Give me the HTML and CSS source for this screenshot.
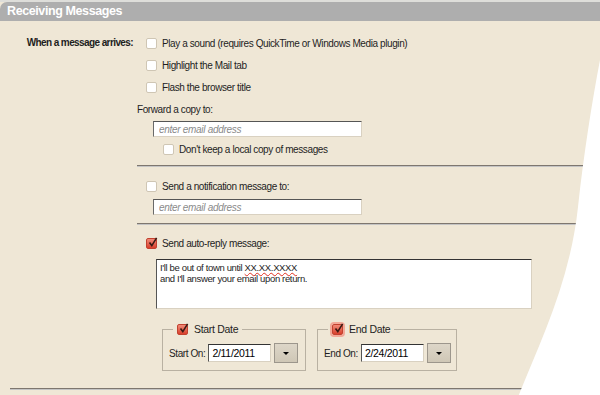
FILE: index.html
```html
<!DOCTYPE html>
<html lang="en">
  <head>
    <meta charset="UTF-8" />
    <title>Receiving Messages</title>
    <link rel="stylesheet" href="styles.css">
  </head>
  <body>
    <div class="page">
      <h2 class="bar">Receiving Messages</h2>

      <div class="section">
        <div class="label-col">When a message arrives:</div>
        <div class="options">
          <div class="check-row"><span class="cb"></span>Play a sound (requires QuickTime or Windows Media plugin)</div>
          <div class="check-row"><span class="cb"></span>Highlight the Mail tab</div>
          <div class="check-row"><span class="cb"></span>Flash the browser title</div>
          <div class="plain-row">Forward a copy to:</div>
          <input type="text" class="email" placeholder="enter email address" />
          <div class="check-row sub"><span class="cb"></span>Don't keep a local copy of messages</div>

          <div class="sep first"></div>

          <div class="check-row gap"><span class="cb"></span>Send a notification message to:</div>
          <input type="text" class="email notify" placeholder="enter email address" />

          <div class="sep"></div>

          <div class="check-row gap2">
            <span class="cb on"><svg viewBox="0 0 11 11"><path d="M2.5 5.5 L4.8 8.6 L9.6 0.8" /></svg></span>Send auto-reply message:
          </div>
          <div class="reply">I'll be out of town until <span class="typo">XX.XX.XXXX</span><br>and I'll answer your email upon return.</div>

          <div class="dates">
            <fieldset class="date-box">
              <legend><span class="cb on"><svg viewBox="0 0 11 11"><path d="M2.5 5.5 L4.8 8.6 L9.6 0.8" /></svg></span>Start Date</legend>
              <div class="date-row">
                <span>Start On:</span>
                <input type="text" class="date" value="2/11/2011" />
                <button class="pick"><span class="tri"></span></button>
              </div>
            </fieldset>
            <fieldset class="date-box end">
              <legend><span class="cb on focus"><svg viewBox="0 0 11 11"><path d="M2.5 5.5 L4.8 8.6 L9.6 0.8" /></svg></span>End Date</legend>
              <div class="date-row">
                <span>End On:</span>
                <input type="text" class="date" value="2/24/2011" />
                <button class="pick"><span class="tri"></span></button>
              </div>
            </fieldset>
          </div>
        </div>
      </div>

      <div class="sep bottom"></div>

      <!-- torn page edge over the right side -->
      <svg class="tear" viewBox="0 0 100 395" preserveAspectRatio="none">
        <path d="M100 58 C92 100 84 150 78 205 C70 280 40 340 18 395 L100 395 Z" />
      </svg>
    </div>
  </body>
</html>
```

FILE: styles.css
```css
body {
  margin: 0;
  font-family: "Liberation Sans", Arial, sans-serif;
  font-size: 10px;
  letter-spacing: -0.4px;
  color: #1e1e1e;
  background: #efe7d6;
}
.page {
  position: relative;
  height: 395px;
  overflow: hidden;
  border-top: 2px solid #dededa;
  box-sizing: border-box;
}
.bar {
  margin: 0;
  height: 19px;
  line-height: 19px;
  padding-left: 7px;
  background: #aeaeae;
  color: #fff;
  font-size: 12.5px;
  letter-spacing: -0.4px;
  font-weight: bold;
  border-top-left-radius: 7px;
}
.section {
  display: flex;
  padding-top: 11px;
}
.label-col {
  width: 133px;
  padding-right: 4px;
  text-align: right;
  font-weight: bold;
  letter-spacing: -0.6px;
  line-height: 22px;
}
.options {
  flex: 1;
  display: flex;
  flex-direction: column;
}
.check-row {
  display: flex;
  align-items: center;
  height: 22px;
  padding-left: 9px;
}
.check-row.sub {
  height: 18px;
  margin-top: 3px;
  padding-left: 26px;
}
.check-row.gap {
  margin-top: 8px;
}
.check-row.gap2 {
  margin-top: 7px;
}
.plain-row {
  height: 22px;
  line-height: 22px;
  margin-top: 1px;
}
.cb {
  width: 9px;
  height: 9px;
  border: 1px solid #cfc6b4;
  border-radius: 2px;
  background: #fff;
  margin-right: 5px;
  flex: none;
  position: relative;
}
.cb.on {
  background: linear-gradient(#f08a78, #d9402c);
  border-color: #c2412f;
}
.cb.focus {
  box-shadow: 0 0 0 2px #f3a898;
}
.cb svg {
  position: absolute;
  left: 0;
  top: -2px;
  width: 11px;
  height: 11px;
}
.cb svg path {
  fill: none;
  stroke: #3a1a14;
  stroke-width: 1.6;
}
.email {
  width: 209px;
  height: 16px;
  box-sizing: border-box;
  margin-left: 16px;
  padding: 0 5px;
  border: 1px solid #d9d1c1;
  border-top-color: #555;
  border-left-color: #6a6a6a;
  background: #fff;
  font-family: inherit;
  font-size: 10px;
  letter-spacing: -0.3px;
}
.email.notify {
  margin-top: 2px;
}
.email::placeholder {
  color: #8a8a8a;
  font-style: italic;
}
.sep {
  height: 1px;
  border-top: 1px solid #7e776f;
  background: #c4c4c4;
  margin-top: 8px;
}
.sep.first {
  margin-top: 7px;
}
.reply {
  margin-top: 5px;
  margin-left: 19px;
  width: 376px;
  height: 50px;
  box-sizing: border-box;
  padding: 2px 3px;
  background: #fff;
  border: 1px solid #d9d1c1;
  border-top-color: #333;
  border-left-color: #555;
  font-size: 9.5px;
  letter-spacing: -0.35px;
  line-height: 11px;
}
.typo {
  text-decoration: underline wavy #e03020;
  text-decoration-thickness: 1px;
}
.dates {
  display: flex;
  gap: 11px;
  margin-left: 25px;
  margin-top: 14px;
}
.date-box {
  margin: 0;
  min-width: 0;
  width: 144px;
  height: 48px;
  box-sizing: border-box;
  padding: 8px 6px 0;
  border: 1px solid #b9b1a2;
}
.date-box.end {
  width: 140px;
}
.date-box legend {
  display: flex;
  align-items: center;
  margin-left: 4px;
  padding: 0 4px;
  font-size: 10.5px;
  letter-spacing: -0.3px;
}
.date-box legend .cb {
  margin-right: 6px;
}
.date-row {
  display: flex;
  align-items: center;
  gap: 3px;
  white-space: nowrap;
}
.date {
  width: 63px;
  height: 18px;
  flex: none;
  box-sizing: border-box;
  padding: 0 3px;
  border: 1px solid #d9d1c1;
  border-top-color: #333;
  border-left-color: #555;
  font-family: inherit;
  font-size: 10.5px;
  letter-spacing: -0.3px;
}
.pick {
  width: 24px;
  height: 20px;
  flex: none;
  padding: 0;
  border: 1px solid #9c968c;
  background: linear-gradient(#ddd6c8, #cfc7b6);
  display: flex;
  align-items: center;
  justify-content: center;
}
.tri {
  border-left: 3px solid transparent;
  border-right: 3px solid transparent;
  border-top: 3px solid #000;
}
.sep.bottom {
  margin: 17px 0 0 10px;
}
.tear {
  position: absolute;
  top: 0;
  right: 0;
  width: 100px;
  height: 395px;
}
.tear path {
  fill: #fff;
}
```
